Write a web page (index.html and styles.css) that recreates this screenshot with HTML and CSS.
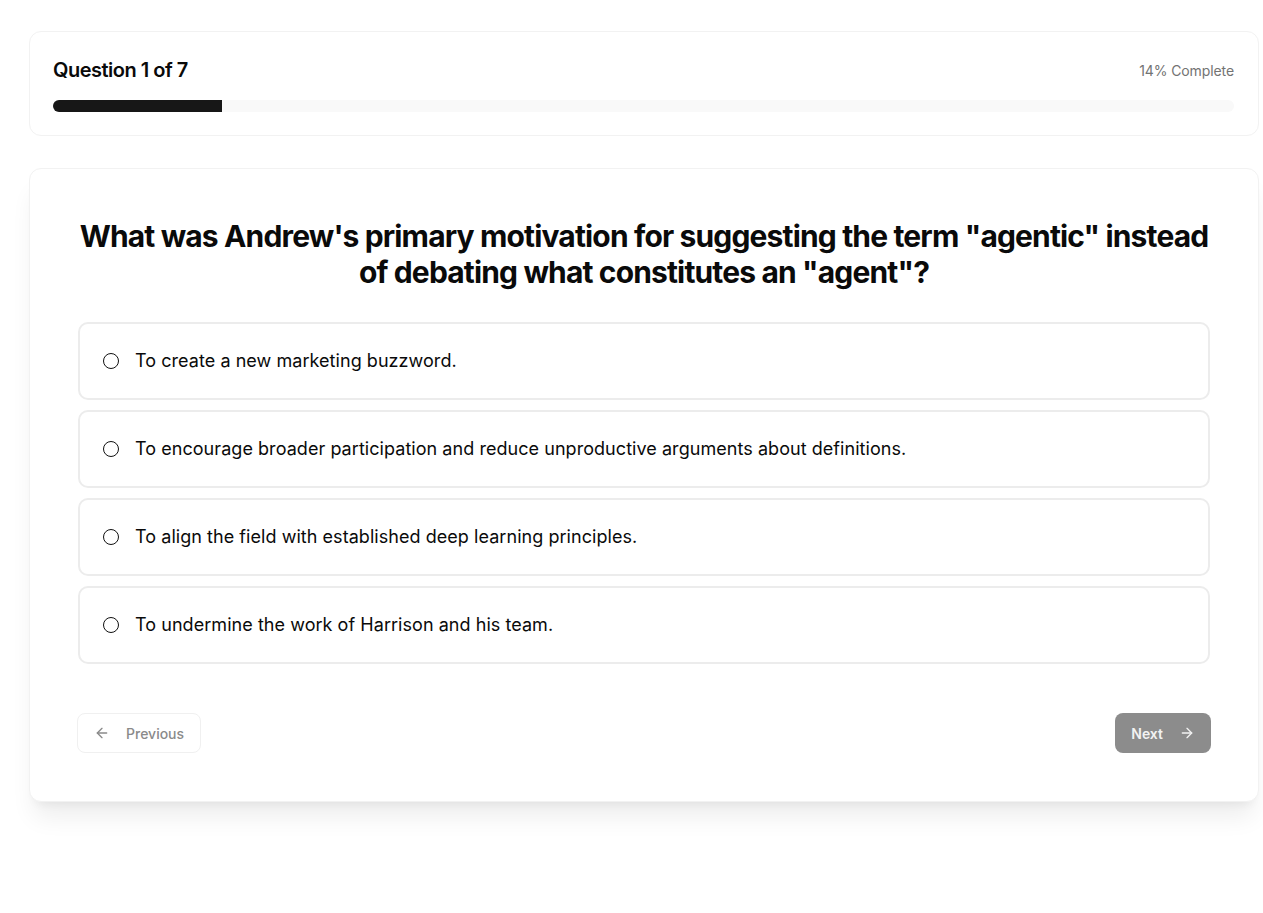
FILE: index.html
```html
<!DOCTYPE html>
<html lang="en">
<head>
    <meta charset="UTF-8">
    <meta name="viewport" content="width=device-width, initial-scale=1.0">
    <title>Quiz</title>
    <link rel="stylesheet" href="styles.css">
</head>
<body>
    <div class="page">
        <div class="card progress-card">
            <div class="progress-head">
                <h2 class="progress-title">Question 1 of 7</h2>
                <span class="progress-label">14% Complete</span>
            </div>
            <div class="progress-track">
                <div class="progress-fill" style="width: 14.29%"></div>
            </div>
        </div>

        <div class="card question-card">
            <h1 class="question">What was Andrew's primary motivation for suggesting the term "agentic" instead of debating what constitutes an "agent"?</h1>

            <div class="options">
                <label class="option"><span class="radio"></span>To create a new marketing buzzword.</label>
                <label class="option"><span class="radio"></span>To encourage broader participation and reduce unproductive arguments about definitions.</label>
                <label class="option"><span class="radio"></span>To align the field with established deep learning principles.</label>
                <label class="option"><span class="radio"></span>To undermine the work of Harrison and his team.</label>
            </div>

            <div class="nav">
                <button class="btn btn-prev">
                    <svg width="16" height="16" viewBox="0 0 24 24" fill="none" stroke="currentColor" stroke-width="2" stroke-linecap="round" stroke-linejoin="round"><path d="M19 12H5"/><path d="M12 19l-7-7 7-7"/></svg>
                    Previous
                </button>
                <button class="btn btn-next">
                    Next
                    <svg width="16" height="16" viewBox="0 0 24 24" fill="none" stroke="currentColor" stroke-width="2" stroke-linecap="round" stroke-linejoin="round"><path d="M5 12h14"/><path d="M12 5l7 7-7 7"/></svg>
                </button>
            </div>
        </div>
    </div>
</body>
</html>
```

FILE: styles.css
```css
body {
    font-family: Inter, 'Noto Sans', Arial, sans-serif;
    margin: 0;
    padding: 0;
    background-color: #fff;
    color: #0a0a0a;
}

.page {
    padding: 31px 4px 40px 29px;
    display: flex;
    flex-direction: column;
    gap: 32px;
}

.card {
    background: #fff;
    border: 1px solid #f2f2f2;
    border-radius: 12px;
}

.progress-card {
    padding: 23px 24px 23px 23px;
}

.progress-head {
    display: flex;
    justify-content: space-between;
    align-items: center;
    height: 30px;
}

.progress-title {
    margin: 0;
    font-size: 20px;
    line-height: 28px;
    font-weight: 600;
    letter-spacing: -0.5px;
}

.progress-label {
    font-size: 14px;
    color: #737373;
    letter-spacing: -0.1px;
}

.progress-track {
    margin-top: 15px;
    height: 12px;
    background: #f9f9f9;
    border-radius: 6px;
    overflow: hidden;
}

.progress-fill {
    height: 100%;
    background: #171717;
}

.question-card {
    padding: 49px 48px 48px;
    box-shadow: 0 20px 25px -5px rgba(0, 0, 0, 0.07), 0 8px 10px -6px rgba(0, 0, 0, 0.06);
}

.question {
    margin: 0 -4px;
    font-size: 30px;
    line-height: 36px;
    font-weight: 700;
    text-align: center;
    letter-spacing: -0.85px;
}

.options {
    margin-top: 32px;
    display: flex;
    flex-direction: column;
    gap: 10px;
}

.option {
    display: flex;
    align-items: center;
    gap: 16px;
    box-sizing: border-box;
    height: 78px;
    padding: 0 23px;
    border: 2px solid #ececec;
    border-radius: 10px;
    font-size: 18px;
    line-height: 26px;
    letter-spacing: 0.05px;
    cursor: pointer;
}

.radio {
    width: 16px;
    height: 16px;
    box-sizing: border-box;
    border: 1px solid #111;
    border-radius: 50%;
    flex-shrink: 0;
}

.nav {
    margin: 49px -1px 0;
    display: flex;
    justify-content: space-between;
}

.btn {
    display: flex;
    align-items: center;
    gap: 16px;
    height: 40px;
    padding: 0 16px;
    border-radius: 8px;
    font-family: inherit;
    font-size: 14px;
    font-weight: 500;
    cursor: pointer;
}

.btn-prev {
    background: #fff;
    border: 1px solid #f0f0f0;
    color: #8a8a8a;
}

.btn-next {
    background: #8c8c8c;
    border: none;
    color: #f2f2f2;
    font-weight: 600;
}
```
